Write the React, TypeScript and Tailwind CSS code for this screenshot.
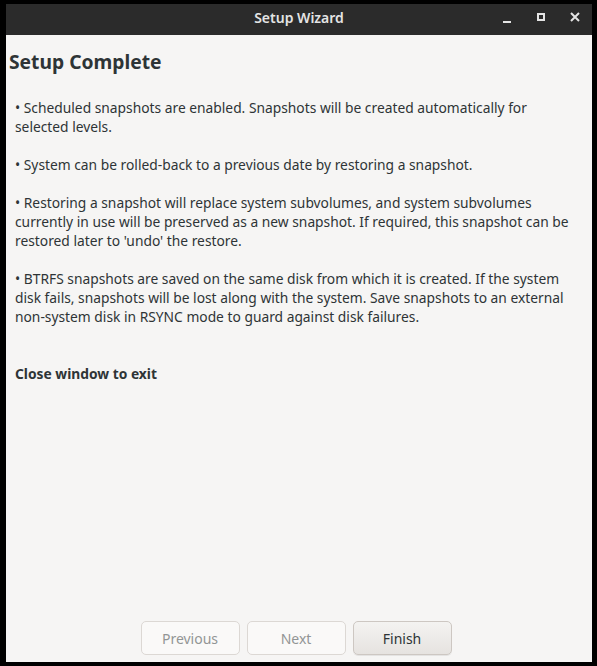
import React from "react";

const lines: string[][] = [
  [
    "• Scheduled snapshots are enabled. Snapshots will be created automatically for",
    "selected levels.",
  ],
  ["• System can be rolled-back to a previous date by restoring a snapshot."],
  [
    "• Restoring a snapshot will replace system subvolumes, and system subvolumes",
    "currently in use will be preserved as a new snapshot. If required, this snapshot can be",
    "restored later to 'undo' the restore.",
  ],
  [
    "• BTRFS snapshots are saved on the same disk from which it is created. If the system",
    "disk fails, snapshots will be lost along with the system. Save snapshots to an external",
    "non-system disk in RSYNC mode to guard against disk failures.",
  ],
];

function WizardButton({ label, disabled }: { label: string; disabled?: boolean }) {
  return (
    <button
      className={
        disabled
          ? "h-[34px] w-[99px] rounded-[5px] border border-[#dcd8d4] bg-[#faf9f8] text-[14px] text-[#929595]"
          : "h-[34px] w-[99px] rounded-[5px] border border-[#cdc7c2] bg-gradient-to-b from-[#f4f3f1] to-[#e6e3e0] text-[14px] text-[#2e3436] shadow-[0_1px_0_rgba(0,0,0,0.07)]"
      }
    >
      {label}
    </button>
  );
}

export default function App() {
  return (
    <div
      className="h-[666px] w-[597px] bg-black pl-[6px] pr-[5px] pt-[4px] pb-[4px]"
      style={{ fontFamily: '"Noto Sans", "Open Sans", sans-serif' }}
    >
      <div className="flex h-full flex-col bg-[#f6f5f4]">
        <div className="relative flex h-[31px] items-center justify-center bg-[#2b2b2b] pb-[5px]">
          <span className="text-[14px] font-semibold text-[#e4e4e4]">Setup Wizard</span>
          <div className="absolute right-0 top-0 flex h-full items-center pb-[5px]">
            <div className="flex h-full w-[34px] items-center justify-center">
              <div className="mt-[9px] h-[2px] w-[8px] bg-[#e4e4e4]" />
            </div>
            <div className="flex h-full w-[34px] items-center justify-center">
              <div className="h-[8px] w-[8px] border-2 border-[#e4e4e4]" />
            </div>
            <div className="flex h-full w-[34px] items-center justify-center">
              <svg width="10" height="10" viewBox="0 0 10 10">
                <path d="M1 1L9 9M9 1L1 9" stroke="#e4e4e4" strokeWidth="2" />
              </svg>
            </div>
          </div>
        </div>

        <div className="flex flex-1 flex-col px-[3px] pt-[13px]">
          <h1 className="text-[19.25px] font-bold leading-[28px] text-[#2e3436]">Setup Complete</h1>
          <div className="mt-[22px] pl-[6px] text-[13.8px] leading-[19px] text-[#2e3436]">
            {lines.map((para, i) => (
              <div key={i} className="mb-[19px]">
                {para.map((l, j) => (
                  <div key={j} className="whitespace-nowrap">
                    {l}
                  </div>
                ))}
              </div>
            ))}
            <div className="mt-[38px] font-bold">Close window to exit</div>
          </div>
        </div>

        <div className="flex justify-center gap-[7px] pb-[7px] pr-[6px]">
          <WizardButton label="Previous" disabled />
          <WizardButton label="Next" disabled />
          <WizardButton label="Finish" />
        </div>
      </div>
    </div>
  );
}
